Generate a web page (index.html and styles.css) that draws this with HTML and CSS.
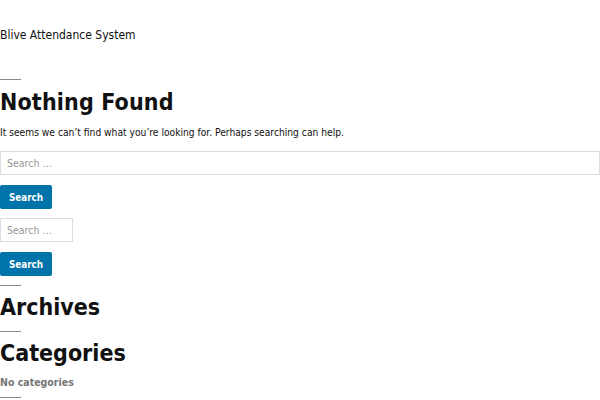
FILE: index.html
```html
<!DOCTYPE html>
<html lang="en">
<head>
  <meta charset="UTF-8">
  <meta name="viewport" content="width=device-width, initial-scale=1.0">
  <title>Nothing Found – Blive Attendance System</title>
  <link rel="stylesheet" href="styles.css">
</head>
<body>
  <!-- Site header -->
  <header class="site-header">
    <p class="site-title">Blive Attendance System</p>
  </header>

  <main class="site-main">
    <section class="no-results">
      <h1 class="page-title">Nothing Found</h1>
      <p class="page-text">It seems we can’t find what you’re looking for. Perhaps searching can help.</p>
      <form class="search-form wide">
        <input type="search" class="search-field" placeholder="Search …">
        <button type="button" class="search-submit">Search</button>
      </form>
    </section>

    <!-- Widgets -->
    <aside class="widget-area">
      <form class="search-form">
        <input type="search" class="search-field small" placeholder="Search …">
        <button type="button" class="search-submit">Search</button>
      </form>

      <div class="widget">
        <h2 class="widget-title">Archives</h2>
      </div>

      <div class="widget">
        <h2 class="widget-title">Categories</h2>
        <p class="widget-empty">No categories</p>
      </div>

      <div class="widget last">
        <hr class="widget-rule">
      </div>
    </aside>
  </main>
</body>
</html>
```

FILE: styles.css
```css
/* General Reset */
* {
  margin: 0;
  padding: 0;
  box-sizing: border-box;
}

body {
  font-family: 'DejaVu Sans Condensed', 'DejaVu Sans', sans-serif;
  font-stretch: condensed;
  background: #fff;
  color: #111;
  overflow: hidden;
}

.site-header {
  padding-top: 28px;
}

.site-title {
  font-size: 12px;
  line-height: 14px;
  color: #111;
}

.site-main {
  padding-top: 37px;
}

/* Short rule above each heading */
.page-title::before,
.widget-title::before {
  content: '';
  display: block;
  width: 21px;
  height: 1px;
  background: #888;
  margin-bottom: 8px;
}

.widget-title::before {
  margin-bottom: 7px;
}

.widget-rule {
  width: 21px;
  height: 1px;
  border: none;
  background: #888;
}

.page-title,
.widget-title {
  font-size: 23px;
  line-height: 28px;
  font-weight: bold;
}

.page-title {
  letter-spacing: 0.15px;
}

.page-text {
  margin-top: 10px;
  font-size: 10.2px;
  line-height: 14px;
}

.search-form {
  display: flex;
  flex-direction: column;
  align-items: flex-start;
  gap: 10px;
}

.search-form.wide {
  margin-top: 11px;
}

.search-field {
  width: 100%;
  height: 24px;
  border: 1px solid #ddd;
  padding: 0 6px;
  font-family: inherit;
  font-stretch: condensed;
  font-size: 10.5px;
  color: #111;
  outline: none;
}

.search-field.small {
  width: 73px;
}

.search-field::placeholder {
  color: #999;
}

.search-submit {
  height: 24px;
  padding: 0 9px;
  border: none;
  border-radius: 2px;
  background: #0073aa;
  color: #fff;
  font-family: inherit;
  font-stretch: condensed;
  font-size: 9.8px;
  font-weight: bold;
  cursor: pointer;
}

.widget-area {
  margin-top: 9px;
}

.widget {
  margin-top: 9px;
}

.widget + .widget {
  margin-top: 10px;
}

.widget.last {
  margin-top: 8px;
}

.widget-empty {
  margin-top: 8px;
  font-size: 10.5px;
  line-height: 14px;
  font-weight: bold;
  color: #767676;
}
```
